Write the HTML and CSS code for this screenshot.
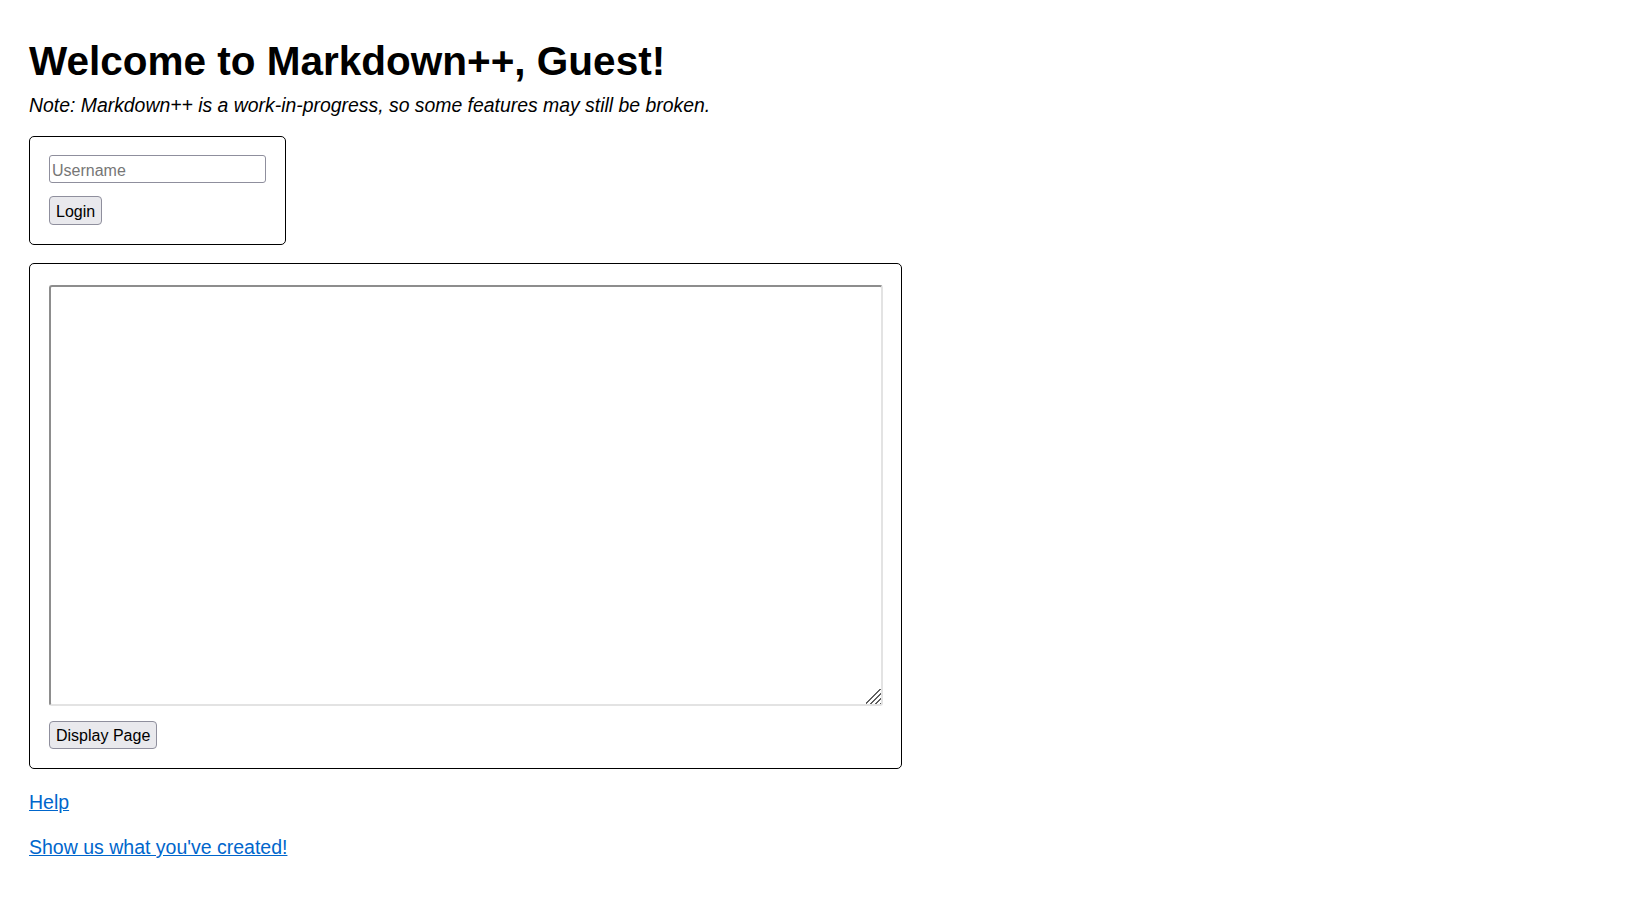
FILE: index.html
```html
<!DOCTYPE html>
<html lang="en">
<head>
<meta charset="utf-8">
<title>Markdown++</title>
<link rel="stylesheet" href="styles.css">
</head>
<body>
  <h1 class="title">Welcome to Markdown++, Guest!</h1>
  <p class="note">Note: Markdown++ is a work-in-progress, so some features may still be broken.</p>

  <form class="panel login-panel">
    <input class="text-input" type="text" placeholder="Username">
    <button class="btn login-btn" type="button">Login</button>
  </form>

  <form class="panel editor-panel">
    <textarea class="editor"></textarea>
    <button class="btn display-btn" type="button">Display Page</button>
  </form>

  <p class="link-row help-row"><a class="link" href="#">Help</a></p>
  <p class="link-row show-row"><a class="link" href="#">Show us what you've created!</a></p>
</body>
</html>
```

FILE: styles.css
```css
html, body {
  background: #ffffff;
}

body {
  margin: 0;
  padding: 38px 29px 40px 29px;
  font-family: "Liberation Sans", Arial, sans-serif;
  color: #000000;
}

.title {
  margin: 0;
  font-size: 40.5px;
  line-height: 46px;
  font-weight: bold;
}

.note {
  margin: 10px 0 0 0;
  font-size: 19.4px;
  line-height: 22px;
  font-style: italic;
}

.panel {
  display: flex;
  flex-direction: column;
  align-items: flex-start;
  width: fit-content;
  border: 1px solid #000000;
  border-radius: 5px;
  margin: 0;
}

.login-panel {
  margin-top: 20px;
  padding: 18px 19px 19px 19px;
  gap: 13px;
}

.editor-panel {
  margin-top: 18px;
  padding: 21px 18px 19px 19px;
  gap: 15px;
}

.text-input {
  box-sizing: border-box;
  width: 217px;
  height: 28px;
  margin: 0;
  padding: 3px 2px 0 2px;
  border: 1px solid #8f8f9d;
  border-radius: 3px;
  background: #ffffff;
  font-family: "Liberation Sans", Arial, sans-serif;
  font-size: 16px;
  color: #000000;
}

.text-input::placeholder {
  color: #767676;
  opacity: 1;
}

.btn {
  box-sizing: border-box;
  height: 29px;
  margin: 0;
  padding: 2px 6px 0 6px;
  border: 1px solid #8f8f9d;
  border-radius: 4px;
  background: #e9e9ed;
  font-family: "Liberation Sans", Arial, sans-serif;
  font-size: 16px;
  color: #000000;
  line-height: 25px;
}

.display-btn {
  height: 28px;
  line-height: 24px;
}

.editor {
  box-sizing: border-box;
  display: block;
  width: 834px;
  height: 421px;
  margin: 0;
  padding: 2px;
  border-width: 2px;
  border-style: solid;
  border-color: #8d8d8d #e3e3e3 #e3e3e3 #8d8d8d;
  border-radius: 3px;
  background: #ffffff;
  font-family: "Liberation Mono", monospace;
  font-size: 13px;
  resize: both;
}

.editor::-webkit-resizer {
  background:
    linear-gradient(135deg, #ffffff 0 45%, transparent 45%),
    repeating-linear-gradient(135deg, transparent 0 2.2px, #5f5f5f 2.2px 3.6px);
}

.link-row {
  margin: 0;
  font-size: 19.5px;
  line-height: 22px;
}

.help-row {
  margin-top: 22px;
}

.show-row {
  margin-top: 23px;
}

.link {
  color: #0066cc;
  text-decoration: underline;
}
```
